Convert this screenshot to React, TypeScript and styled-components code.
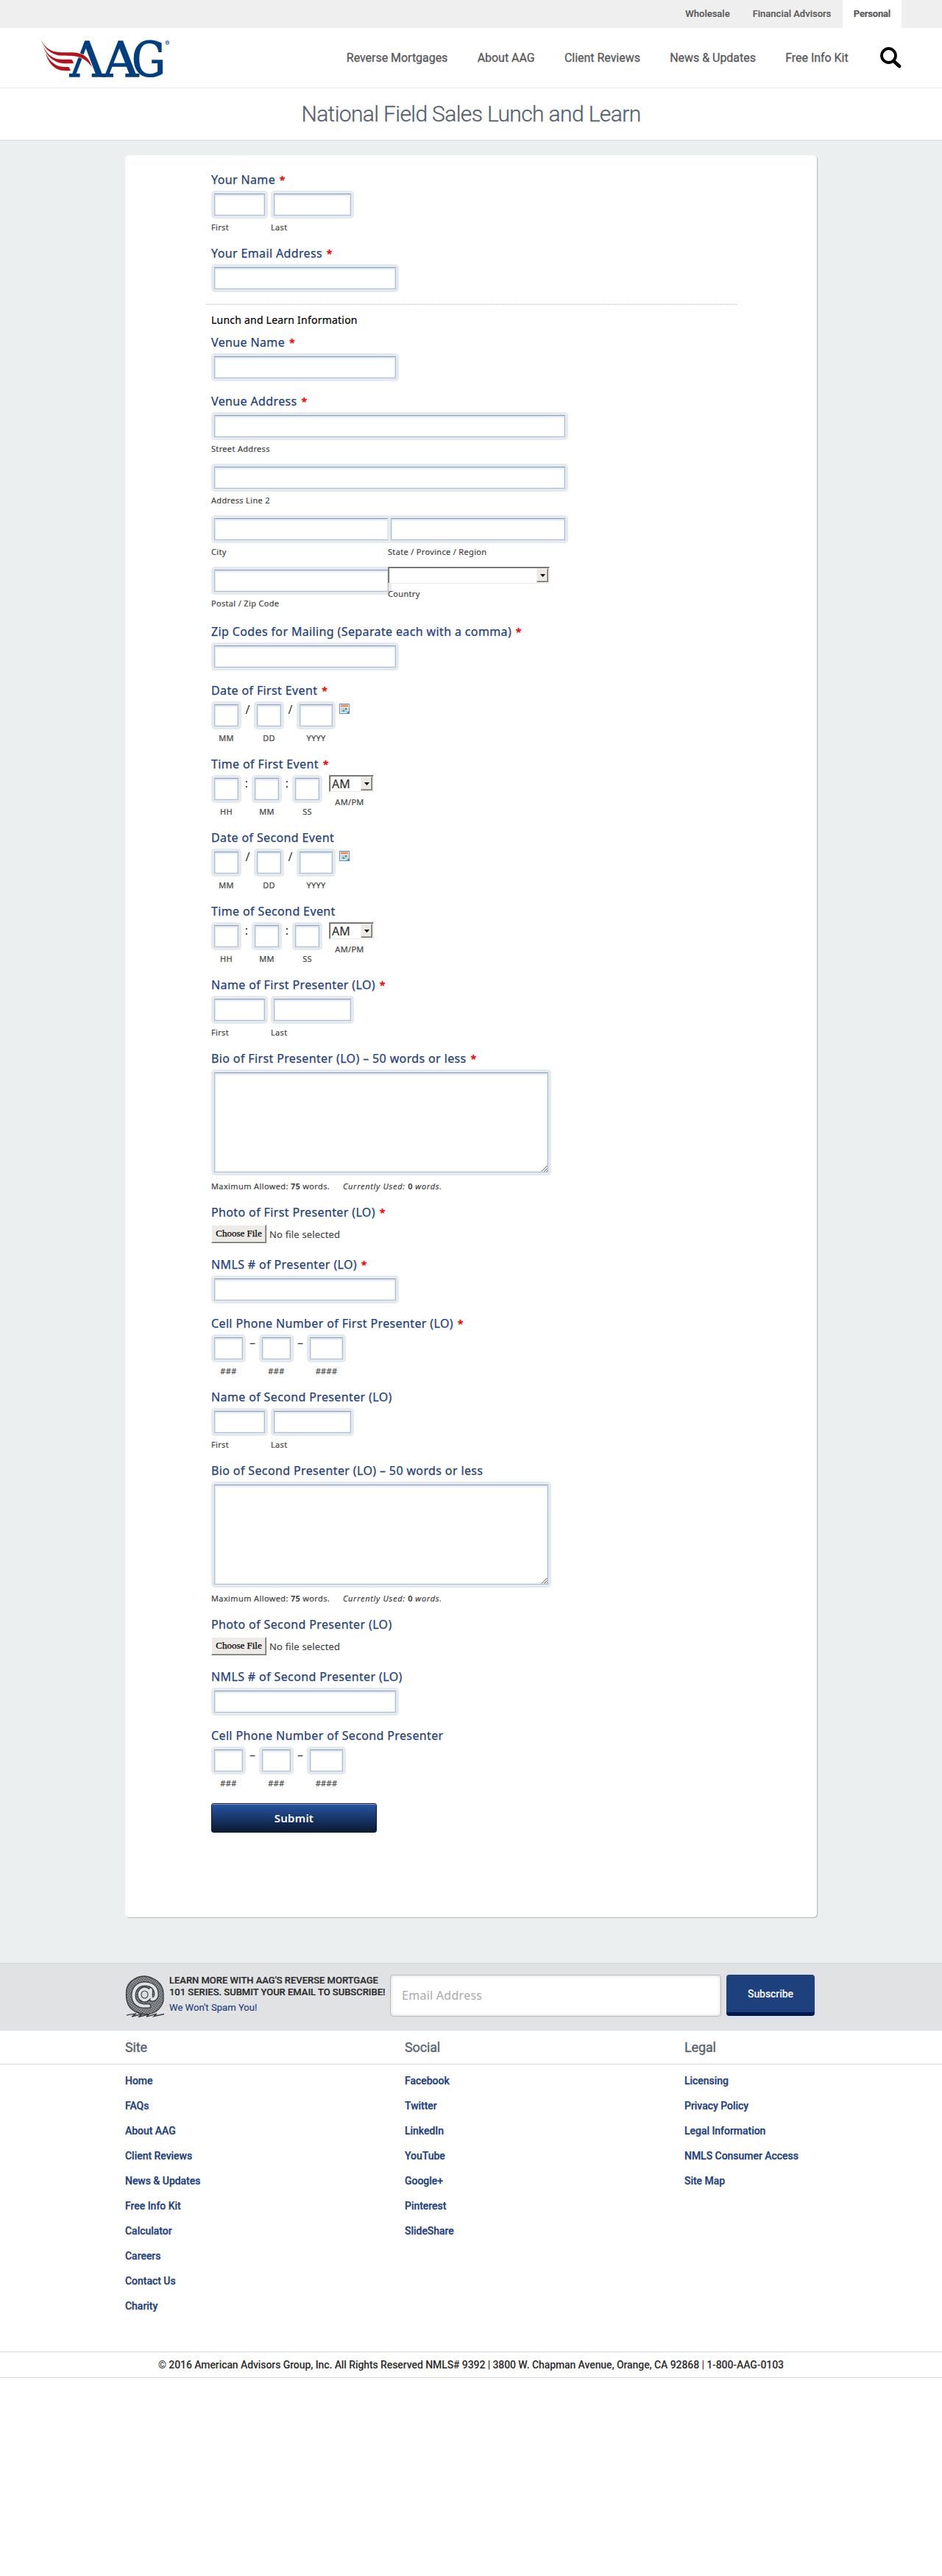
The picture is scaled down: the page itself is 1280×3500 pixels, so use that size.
import React from "react";
import styled, { createGlobalStyle, css } from "styled-components";

const humanist = `"Noto Sans", "Open Sans", sans-serif`;
const grotesque = `Roboto, "Liberation Sans", sans-serif`;

const GlobalStyle = createGlobalStyle`
  *, *::before, *::after { box-sizing: border-box; }
  body { margin: 0; background: #fff; font-family: ${grotesque}; color: #333; }
  a { color: inherit; text-decoration: none; }
  ul { list-style: none; margin: 0; padding: 0; }
  h1, h2, h3, p { margin: 0; font-weight: 400; }
`;

/* ---------- header ---------- */

const TopBar = styled.nav`
  display: flex;
  justify-content: flex-end;
  height: 38px;
  padding-right: 55px;
  background: #efefef;
`;

const TopTab = styled.a<{ $active?: boolean }>`
  display: flex;
  align-items: center;
  padding: 1px 15.5px 3px;
  font-size: 13px;
  font-weight: 500;
  color: #58585a;
  -webkit-text-stroke: 0.15px #58585a;
  background: ${(p) => (p.$active ? "#fff" : "transparent")};
  ${(p) =>
    p.$active &&
    css`
      font-weight: 700;
      letter-spacing: -0.2px;
      padding-left: 15px;
      padding-right: 15px;
    `}
`;

const Header = styled.header`
  display: flex;
  align-items: center;
  justify-content: space-between;
  height: 82px;
  padding: 0 55px 0 54px;
  border-bottom: 1px solid #ececec;
`;

const MainNav = styled.nav`
  display: flex;
  align-items: center;
  gap: 40.3px;
  font-size: 16px;
  letter-spacing: -0.03px;
  -webkit-text-stroke: 0.3px #58585a;
  color: #58585a;
`;

const SearchButton = styled.a`
  display: flex;
  margin-left: 3px;
`;

const TitleBand = styled.div`
  display: flex;
  align-items: center;
  justify-content: center;
  height: 71px;
  border-bottom: 1px solid #d8dadb;
`;

const Title = styled.h1`
  font-size: 30px;
  font-weight: 300;
  letter-spacing: -0.63px;
  line-height: 40px;
  padding-bottom: 1px;
  color: #56626e;
  -webkit-text-stroke: 0.3px #56626e;
`;

/* ---------- form ---------- */

const Content = styled.main`
  height: 2476px;
  padding-top: 20px;
  background: #ebeff0;
`;

const Card = styled.div`
  width: 940px;
  height: 2394px;
  margin: 0 auto;
  padding: 18px 110px 0;
  border-radius: 5px;
  background: #fff;
  box-shadow: 1px 1px 1px #b0b6ba;
`;

const Field = styled.div<{ $height: number }>`
  height: ${(p) => p.$height}px;
  padding-left: 7px;
`;

const Label = styled.label`
  display: block;
  height: 30px;
  line-height: 31px;
  font-family: ${humanist};
  font-size: 16px;
  letter-spacing: 0.37px;
  color: #1e407c;
  -webkit-text-stroke: 0.25px #1e407c;
  white-space: nowrap;
`;

const Required = styled.span`
  color: #f00;
  font-weight: 700;
  font-size: 15px;
  margin-left: 1px;
  -webkit-text-stroke: 0;
`;

const Row = styled.div`
  display: flex;
  align-items: flex-start;
`;

const Cell = styled.div<{ $width: number; $center?: boolean; $height?: number }>`
  width: ${(p) => p.$width}px;
  height: ${(p) => (p.$height ? `${p.$height}px` : "auto")};
  flex: none;
  text-align: ${(p) => (p.$center ? "center" : "left")};
`;

const ringed = css`
  display: block;
  margin: 4px;
  padding: 2px 4px;
  border: 1px solid #adbdd8;
  border-top-color: #8aa0be;
  border-radius: 0;
  outline: none;
  background: linear-gradient(#cdd8e4 0, #f1f4f7 2px, #fff 4px, #fff calc(100% - 2px), #eef2f7 100%);
  box-shadow: inset 1px 0 1px #dfe6ee, inset -1px 0 1px #dfe6ee;
  font: 14px ${humanist};
`;

/* The 4px halo needs a rounded outer edge while the control stays square. */
const Ring = styled.div<{ $width: number; $height?: number }>`
  display: flex;
  width: ${(p) => p.$width}px;
  height: ${(p) => p.$height ?? 38}px;
  border-radius: 5px;
  background: #e4eaee;
`;

const TextInput = styled.input`
  ${ringed}
  flex: 1;
  min-width: 0;
`;

const TextArea = styled.textarea`
  ${ringed}
  flex: 1;
  min-width: 0;
  resize: none;
`;

const AreaWrap = styled.div`
  position: relative;
  width: 462px;
`;

const ResizeGrip = styled.svg`
  position: absolute;
  right: 5px;
  bottom: 5px;
`;

const Hint = styled.span<{ $gap?: number }>`
  display: block;
  margin-top: ${(p) => p.$gap ?? 4}px;
  font-family: ${humanist};
  font-size: 11px;
  line-height: 16px;
  letter-spacing: 0.33px;
  white-space: nowrap;
  color: #444;
  -webkit-text-stroke: 0.2px #444;
`;

const Separator = styled.span<{ $width: number }>`
  width: ${(p) => p.$width}px;
  flex: none;
  text-align: center;
  font-family: ${humanist};
  font-size: 16px;
  line-height: 23px;
  color: #333;
`;

const Section = styled.div`
  height: 41px;
  margin: 0 110px 0 0;
  padding: 4px 0 0;
  h3 {
    width: 721px;
    padding: 11px 7px 0;
    border-top: 1px dotted #bbb;
    font-family: ${humanist};
    font-size: 14px;
    line-height: 19px;
    letter-spacing: 0.22px;
    color: #000;
    -webkit-text-stroke: 0.2px #000;
  }
`;

const SelectBox = styled.div<{ $width: number }>`
  display: flex;
  justify-content: space-between;
  width: ${(p) => p.$width}px;
  height: 23px;
  border: 1px solid;
  border-color: #8d8b87 #ece9e3 #ece9e3 #8d8b87;
  box-shadow: inset 1px 1px 0 #686662;
  background: #fff;
  font-family: ${humanist};
  font-size: 16px;
  line-height: 21px;
  padding: 1px 1px 1px 3px;
  color: #333;
`;

const SelectText = styled.span`
  line-height: 21px;
  -webkit-text-stroke: 0.2px #333;
`;

const SelectArrow = styled.span`
  display: flex;
  align-items: center;
  justify-content: center;
  width: 16px;
  height: 19px;
  border: 1px solid;
  border-color: #f4f2ee #6e6c69 #6e6c69 #f4f2ee;
  background: #ece9e4;
  box-shadow: inset -1px -1px 0 #a9a6a1;
`;

const CalendarButton = styled.span`
  display: flex;
  margin: 3px 0 0 5px;
`;

const Counter = styled.p`
  margin-top: 7px;
  font-family: ${humanist};
  font-size: 11px;
  line-height: 16px;
  letter-spacing: 0.38px;
  color: #444;
  -webkit-text-stroke: 0.2px #444;
  b { letter-spacing: 0.2px; -webkit-text-stroke: 0; }
  em { margin-left: 14.5px; letter-spacing: 0.68px; }
  em b { font-style: normal; }
`;

const FileRow = styled.div`
  display: flex;
  align-items: center;
  gap: 4px;
  margin-top: 2px;
  font-family: ${humanist};
  font-size: 13px;
  letter-spacing: 0.17px;
  color: #444;
  -webkit-text-stroke: 0.15px #444;
`;

const FileButton = styled.button`
  width: 75px;
  height: 25px;
  padding: 0 0 1px;
  border: 1px solid;
  border-color: #fff #6e6c69 #6e6c69 #fff;
  background: #eeebe6;
  box-shadow: inset -1px -1px 0 #a9a6a1;
  font: 13px "Liberation Serif", serif;
  -webkit-text-stroke: 0.25px #000;
  color: #000;
`;

const SubmitButton = styled.button`
  display: block;
  width: 225px;
  height: 40px;
  margin: 7px 0 0 7px;
  padding: 0 0 1px;
  border: 1px solid #0b1a33;
  border-radius: 3px;
  background: linear-gradient(#2655a3, #0d1e3a 92%);
  box-shadow: inset 0 1px 0 #8ba5d0;
  font: 600 15px ${humanist};
  letter-spacing: 0.25px;
  color: #fff;
`;

/* ---------- subscribe bar ---------- */

const SubscribeBar = styled.section`
  height: 92px;
  border-top: 1px solid #d6d8d9;
  background: #e1e2e4;
`;

const SubscribeInner = styled.div`
  display: flex;
  width: 940px;
  margin: 0 auto;
  padding-top: 15px;
`;

const SubscribeCopy = styled.div`
  flex: none;
  width: 306px;
  padding: 0 0 0 6px;
  font-size: 13px;
  line-height: 16px;
  white-space: nowrap;
  color: #2b2b2b;
  strong { display: block; font-weight: 500; letter-spacing: -0.02px; -webkit-text-stroke: 0.2px #2b2b2b; }
  span { display: block; margin-top: 5px; letter-spacing: 0.05px; color: #1e407c; -webkit-text-stroke: 0.15px #1e407c; }
`;

const EmailInput = styled.input`
  flex: none;
  width: 450px;
  height: 57px;
  padding: 0 15px 2px;
  border: 1px solid #b9bcbb;
  border-radius: 4px;
  background: #fff;
  box-shadow: inset 0 0 5px #cfd3d2;
  font: 16px ${humanist};
  letter-spacing: 0.27px;
  outline: none;
  &::placeholder { color: #a9a9a9; }
`;

const SubscribeButton = styled.button`
  flex: none;
  width: 120px;
  height: 56px;
  margin-left: 7px;
  padding: 0;
  border: 0;
  border-bottom: 5px solid #001a50;
  border-radius: 4px;
  background: #1e407c;
  font: 500 14px ${grotesque};
  letter-spacing: -0.05px;
  color: #fff;
`;

/* ---------- footer ---------- */

const FooterRow = styled.div<{ $height: number }>`
  height: ${(p) => p.$height}px;
  border-bottom: 1px solid #d8dadb;
`;

const FooterGrid = styled.div`
  display: grid;
  grid-template-columns: 380px 380px 180px;
  width: 940px;
  margin: 0 auto;
`;

const FooterHeading = styled.h2`
  font-size: 18px;
  line-height: 45px;
  letter-spacing: -0.15px;
  color: #56626e;
  -webkit-text-stroke: 0.35px #56626e;
`;

const FooterLinks = styled.ul`
  padding-top: 5px;
  font-size: 14px;
  font-weight: 500;
  line-height: 34px;
  letter-spacing: -0.03px;
  white-space: nowrap;
  color: #1e407c;
  -webkit-text-stroke: 0.25px #1e407c;
`;

const Copyright = styled.p`
  height: 35px;
  border-bottom: 1px solid #d8dadb;
  text-align: center;
  font-size: 14px;
  font-weight: 500;
  line-height: 35px;
  letter-spacing: -0.083px;
  color: #2b2b2b;
`;

/* ---------- drawings ---------- */

const Logo = () => (
  <svg width="180" height="80" viewBox="54 38 180 80" role="img" aria-label="AAG">
    <g fill="#003f7f" stroke="#003f7f" strokeWidth="1.4" fontFamily='"DejaVu Serif", serif' fontSize="66">
      <text x="95" y="102.5" textLength="47" lengthAdjust="spacingAndGlyphs">Λ</text>
      <text x="140" y="102.5" textLength="48" lengthAdjust="spacingAndGlyphs">A</text>
      <text x="179" y="102.5" textLength="46" lengthAdjust="spacingAndGlyphs">G</text>
    </g>
    <path
      d="M55 52C60 62 67 69 80 70C92 71 103 69 112 73C120 77 123 84 125 90C119 82 112 77 103 75.500C94 74 84 76 75 73C64 69 59 61 55 52Z"
      fill="#b5121b" stroke="#fff" strokeWidth="1.2" paintOrder="stroke"
    />
    <path d="M58 60C62 70 69 78 80 79.500C87 80 93 79.500 98 80L100 85C91 85.500 83 86 76 82.500C66 78 61 69 58 60Z" fill="#b5121b" />
    <path d="M62 71C66 80 73 88 83 89.500C87 90 90 90 93.500 90L96 95C87 95.500 80 95 74 90.500C68 86 64 79 62 71Z" fill="#b5121b" />
    <circle cx="227.300" cy="57" r="2.500" fill="none" stroke="#003f7f" strokeWidth=".7" />
    <path d="M226.500 58.500v-3h1.200a.8.8 0 0 1 0 1.600h-1.200m1.200 0l.8 1.400" fill="none" stroke="#003f7f" strokeWidth=".6" />
  </svg>
);

const SearchIcon = () => (
  <svg width="29" height="29" viewBox="0 0 29 29" fill="none" stroke="#000" strokeLinecap="round">
    <circle cx="11.500" cy="11.500" r="9.500" strokeWidth="3.800" />
    <path d="M19 19.500L26 26" strokeWidth="4.600" />
  </svg>
);

const CalendarIcon = () => (
  <svg width="14" height="14" viewBox="0 0 14 14">
    <rect x=".5" y=".5" width="13" height="13" fill="#eaf2fd" stroke="#5c8dd0" />
    <path d="M2 1.500h10v3H2z" fill="#f58b4c" />
    <path d="M2 6.500h10M2 8.500h10M2 10.500h10M3.500 5.500v7M5.500 5.500v7M7.500 5.500v7M9.500 5.500v7" stroke="#9dbce6" strokeWidth=".7" />
    <path d="M8 6h2.500v2.500H8zM4.500 8.500H7V11H4.500z" fill="#54a556" />
    <path d="M9.500 13.500L13.500 9.500v4z" fill="#4d7cc4" />
  </svg>
);

const atTail = "M34.500 20.500V30.500C35 35.500 42 33.500 42.500 27C42.500 17.500 36 12.500 27 12.500C16.500 12.500 11.500 20 11.500 28C11.500 37.500 18 42.500 27 42.500H32";

const AtIcon = () => (
  <svg width="54" height="58" viewBox="0 0 54 58" fill="none" stroke="#33383d">
    <defs>
      <pattern id="hatch" width="2.600" height="2.600" patternUnits="userSpaceOnUse" patternTransform="rotate(35)">
        <rect width="2.600" height="2.600" fill="#dcdddf" />
        <path d="M0 0V2.600" stroke="#7d8185" strokeWidth="1" />
      </pattern>
    </defs>
    <path
      d="M26 2C33 2 38 5 43 8C49 13 52 18 52 26V35C51 42 47 46 42 50C37 53 32 54 26 54C18 53 12 50 7 45C3 40 1.500 35 1.500 28C1.500 20 2 15 8 9C13 5 18 2 26 2Z"
      fill="url(#hatch)" strokeWidth="1.300"
    />
    <path d={atTail} strokeWidth="6.600" strokeLinecap="round" />
    <ellipse cx="26.500" cy="27" rx="7" ry="7.500" strokeWidth="6.200" />
    <path d={atTail} stroke="#e1e2e4" strokeWidth="4.200" strokeLinecap="round" />
    <ellipse cx="26.500" cy="27" rx="7" ry="7.500" fill="#dcdddf" stroke="#33383d" strokeWidth="6" />
    <ellipse cx="26.500" cy="27" rx="7" ry="7.500" stroke="#e1e2e4" strokeWidth="3.800" />
    <path d="M34.500 20.500V30" stroke="#e1e2e4" strokeWidth="4.200" strokeLinecap="round" />
    <path d="M2 55C9 53 11 54 15 53L9 57L24 53L18 57.500L33 53.500L29 57L43 53L39 56.500L53 53.500" strokeWidth="1.300" />
  </svg>
);

const Grip = () => (
  <ResizeGrip width="9" height="9" viewBox="0 0 9 9" stroke="#333" strokeWidth=".9">
    <path d="M1 8.500L8.500 1M4.500 8.500L8.500 4.500M7.300 8.500L8.500 7.300" />
  </ResizeGrip>
);

/* ---------- field kinds ---------- */

type Labelled = { label: string; required?: boolean };

const FieldLabel = ({ label, required }: Labelled) => (
  <Label>
    {label}
    {required && <> <Required>*</Required></>}
  </Label>
);

const Boxed = ({ width }: { width: number }) => (
  <Ring $width={width}>
    <TextInput />
  </Ring>
);

const Dropdown = ({ width, value }: { width: number; value?: string }) => (
  <SelectBox $width={width}>
    <SelectText>{value}</SelectText>
    <SelectArrow>
      <svg width="7" height="4"><path d="M0 0H7L3.500 4Z" fill="#000" /></svg>
    </SelectArrow>
  </SelectBox>
);

const TextField = (p: Labelled) => (
  <Field $height={80}>
    <FieldLabel {...p} />
    <Boxed width={255} />
  </Field>
);

const NameField = (p: Labelled) => (
  <Field $height={100}>
    <FieldLabel {...p} />
    <Row>
      <Cell $width={81}><Boxed width={77} /><Hint>First</Hint></Cell>
      <Cell $width={113}><Boxed width={113} /><Hint>Last</Hint></Cell>
    </Row>
  </Field>
);

const Part = ({ width, hint }: { width: number; hint: string }) => (
  <Cell $width={width} $center>
    <Boxed width={width} />
    <Hint>{hint}</Hint>
  </Cell>
);

const DateField = (p: Labelled) => (
  <Field $height={100}>
    <FieldLabel {...p} />
    <Row>
      <Part width={41} hint="MM" />
      <Separator $width={17}>/</Separator>
      <Part width={41} hint="DD" />
      <Separator $width={17}>/</Separator>
      <Part width={53} hint="YYYY" />
      <CalendarButton><CalendarIcon /></CalendarButton>
    </Row>
  </Field>
);

const TimeField = (p: Labelled) => (
  <Field $height={100}>
    <FieldLabel {...p} />
    <Row>
      <Part width={41} hint="HH" />
      <Separator $width={14}>:</Separator>
      <Part width={41} hint="MM" />
      <Separator $width={14}>:</Separator>
      <Part width={41} hint="SS" />
      <Separator $width={9} />
      <Cell $width={61}>
        <Dropdown width={61} value="AM" />
        <Cell $width={56} $center><Hint $gap={6}>AM/PM</Hint></Cell>
      </Cell>
    </Row>
  </Field>
);

const PhoneField = (p: Labelled) => (
  <Field $height={100}>
    <FieldLabel {...p} />
    <Row>
      <Part width={47} hint="###" />
      <Separator $width={18}>–</Separator>
      <Part width={47} hint="###" />
      <Separator $width={18}>–</Separator>
      <Part width={53} hint="####" />
    </Row>
  </Field>
);

const BioField = (p: Labelled) => (
  <Field $height={209}>
    <FieldLabel {...p} />
    <AreaWrap>
      <Ring $width={462} $height={144}><TextArea /></Ring>
      <Grip />
    </AreaWrap>
    <Counter>
      Maximum Allowed: <b>75</b> words.{" "}
      <em>Currently Used: <b>0</b> words.</em>
    </Counter>
  </Field>
);

const PhotoField = (p: Labelled) => (
  <Field $height={71}>
    <FieldLabel {...p} />
    <FileRow>
      <FileButton type="button">Choose File</FileButton>
      No file selected
    </FileRow>
  </Field>
);

const AddressField = (p: Labelled) => (
  <Field $height={313}>
    <FieldLabel {...p} />
    <Cell $width={485} $height={70}><Boxed width={485} /><Hint>Street Address</Hint></Cell>
    <Cell $width={485} $height={70}><Boxed width={485} /><Hint>Address Line 2</Hint></Cell>
    <Row>
      <Cell $width={240} $height={70}><Boxed width={245} /><Hint>City</Hint></Cell>
      <Cell $width={245}><Boxed width={245} /><Hint>State / Province / Region</Hint></Cell>
    </Row>
    <Row>
      <Cell $width={240}><Boxed width={245} /><Hint>Postal / Zip Code</Hint></Cell>
      <Cell $width={220}><Dropdown width={220} /><Hint $gap={6}>Country</Hint></Cell>
    </Row>
  </Field>
);

const footerColumns = [
  { title: "Site", links: ["Home", "FAQs", "About AAG", "Client Reviews", "News & Updates", "Free Info Kit", "Calculator", "Careers", "Contact Us", "Charity"] },
  { title: "Social", links: ["Facebook", "Twitter", "LinkedIn", "YouTube", "Google+", "Pinterest", "SlideShare"] },
  { title: "Legal", links: ["Licensing", "Privacy Policy", "Legal Information", "NMLS Consumer Access", "Site Map"] },
];

export default function App() {
  return (
    <>
      <GlobalStyle />
      <TopBar>
        <TopTab href="#">Wholesale</TopTab>
        <TopTab href="#">Financial Advisors</TopTab>
        <TopTab href="#" $active>Personal</TopTab>
      </TopBar>
      <Header>
        <Logo />
        <MainNav>
          {["Reverse Mortgages", "About AAG", "Client Reviews", "News & Updates", "Free Info Kit"].map((item) => (
            <a href="#" key={item}>{item}</a>
          ))}
          <SearchButton href="#"><SearchIcon /></SearchButton>
        </MainNav>
      </Header>
      <TitleBand>
        <Title>National Field Sales Lunch and Learn</Title>
      </TitleBand>
      <Content>
        <Card>
          <NameField label="Your Name" required />
          <TextField label="Your Email Address" required />
          <Section><h3>Lunch and Learn Information</h3></Section>
          <TextField label="Venue Name" required />
          <AddressField label="Venue Address" required />
          <TextField label="Zip Codes for Mailing (Separate each with a comma)" required />
          <DateField label="Date of First Event" required />
          <TimeField label="Time of First Event" required />
          <DateField label="Date of Second Event" />
          <TimeField label="Time of Second Event" />
          <NameField label="Name of First Presenter (LO)" required />
          <BioField label="Bio of First Presenter (LO) – 50 words or less" required />
          <PhotoField label="Photo of First Presenter (LO)" required />
          <TextField label="NMLS # of Presenter (LO)" required />
          <PhoneField label="Cell Phone Number of First Presenter (LO)" required />
          <NameField label="Name of Second Presenter (LO)" />
          <BioField label="Bio of Second Presenter (LO) – 50 words or less" />
          <PhotoField label="Photo of Second Presenter (LO)" />
          <TextField label="NMLS # of Second Presenter (LO)" />
          <PhoneField label="Cell Phone Number of Second Presenter" />
          <SubmitButton type="button">Submit</SubmitButton>
        </Card>
      </Content>
      <SubscribeBar>
        <SubscribeInner>
          <AtIcon />
          <SubscribeCopy>
            <strong>LEARN MORE WITH AAG'S REVERSE MORTGAGE<br />101 SERIES. SUBMIT YOUR EMAIL TO SUBSCRIBE!</strong>
            <span>We Won't Spam You!</span>
          </SubscribeCopy>
          <EmailInput placeholder="Email Address" />
          <SubscribeButton type="button">Subscribe</SubscribeButton>
        </SubscribeInner>
      </SubscribeBar>
      <footer>
        <FooterRow $height={46}>
          <FooterGrid>
            {footerColumns.map((c) => <FooterHeading key={c.title}>{c.title}</FooterHeading>)}
          </FooterGrid>
        </FooterRow>
        <FooterRow $height={391}>
          <FooterGrid>
            {footerColumns.map((c) => (
              <FooterLinks key={c.title}>
                {c.links.map((l) => <li key={l}><a href="#">{l}</a></li>)}
              </FooterLinks>
            ))}
          </FooterGrid>
        </FooterRow>
        <Copyright>
          © 2016 American Advisors Group, Inc. All Rights Reserved NMLS# 9392 | 3800 W. Chapman Avenue, Orange, CA 92868 | 1-800-AAG-0103
        </Copyright>
      </footer>
    </>
  );
}
